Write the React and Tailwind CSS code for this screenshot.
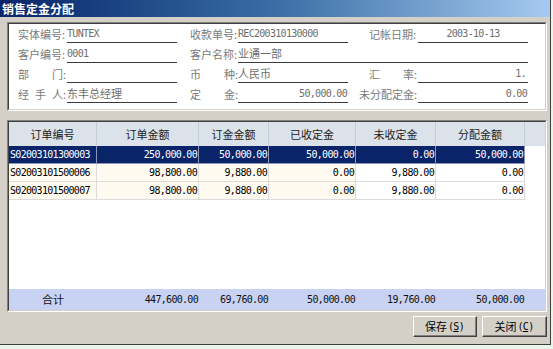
import React from "react";

const CJK = "font-['Noto_Sans_CJK_SC','Noto_Sans',sans-serif]";
const MONO = "font-['DejaVu_Sans_Mono','Liberation_Mono',monospace] text-[10px] tracking-[-0.7px]";

function Label({ parts, className = "" }) {
  return (
    <div className={`flex justify-between whitespace-nowrap text-[11px] leading-[13px] text-[#7a7a7a] pb-[3px] self-end ${className}`}>
      {parts.map((p, i) => (
        <span key={i}>{p}</span>
      ))}
    </div>
  );
}

function Field({ children, className = "", align = "justify-start" }) {
  return (
    <div className={`h-[19px] border-b border-[#3a3a3a] flex items-end pb-[2px] ${align} ${className}`}>
      {children}
    </div>
  );
}

const mono = (t) => <span className={`${MONO} leading-[13px] text-[#6e6e6e]`}>{t}</span>;
const cj = (t) => <span className="text-[11px] leading-[13px] text-[#6e6e6e]">{t}</span>;

const W = ["w-[88px]", "w-[102px]", "w-[70px]", "w-[87px]", "w-[80px]", "w-[89px]"];
const HEAD = ["订单编号", "订单金额", "订金金额", "已收定金", "未收定金", "分配金额"];
const ROWS = [
  ["S02003101300003", "250,000.00", "50,000.00", "50,000.00", "0.00", "50,000.00"],
  ["S02003101500006", "98,800.00", "9,880.00", "0.00", "9,880.00", "0.00"],
  ["S02003101500007", "98,800.00", "9,880.00", "0.00", "9,880.00", "0.00"],
];
const TOTAL = ["合计", "447,600.00", "69,760.00", "50,000.00", "19,760.00", "50,000.00"];

function Sunken({ className = "", children }) {
  return (
    <div className={`border-t border-l border-t-[#808080] border-l-[#808080] border-b border-r border-b-white border-r-white ${className}`}>
      <div className="h-full border-t border-l border-t-[#404040] border-l-[#404040] border-b border-r border-b-[#d4d0c8] border-r-[#d4d0c8] bg-white flex flex-col">
        {children}
      </div>
    </div>
  );
}

function Button({ children, className = "" }) {
  return (
    <div className={`h-[21px] border-t border-l border-t-white border-l-white border-b border-r border-b-[#404040] border-r-[#404040] ${className}`}>
      <div className="h-full border-b border-r border-b-[#808080] border-r-[#808080] bg-[#d4d0c8] flex items-center justify-center text-[11px] leading-[13px] text-black">
        {children}
      </div>
    </div>
  );
}

export default function App() {
  return (
    <div className={`w-[553px] h-[349px] bg-[#eaf5ea] overflow-hidden ${CJK}`}>
      <div className="w-[551px] h-[345px] bg-[#d4d0c8] border-r border-b border-[#404040] flex flex-col">
        <div className="h-[17px] shrink-0 bg-gradient-to-r from-[#0a246a] via-[#3a6ea5] to-[#a6caf0] flex items-center pl-[2px]">
          <span className="text-white font-bold text-[12px] leading-[14px]">销售定金分配</span>
        </div>

        <div className="pl-[7px] pt-[5px] flex flex-col">
          <Sunken className="w-[540px] h-[89px]">
            <div className="flex flex-col pl-[9px]">
              <div className="h-[20px] flex">
                <Label parts={["实体编号:"]} className="w-[48px]" />
                <Field className="w-[110px] ml-[1px]">{mono("TUNTEX")}</Field>
                <Label parts={["收款单号:"]} className="w-[48px] ml-[13px]" />
                <Field className="w-[110px]">{mono("REC200310130000")}</Field>
                <Label parts={["记帐日期:"]} className="w-[48px] ml-[21px]" />
                <Field className="w-[110px] ml-[1px]" align="justify-center">{mono("2003-10-13")}</Field>
              </div>
              <div className="h-[20px] flex">
                <Label parts={["客户编号:"]} className="w-[48px]" />
                <Field className="w-[110px] ml-[1px]">{mono("0001")}</Field>
                <Label parts={["客户名称:"]} className="w-[48px] ml-[13px]" />
                <Field className="w-[290px]">{cj("业通一部")}</Field>
              </div>
              <div className="h-[20px] flex">
                <Label parts={["部", "门:"]} className="w-[48px]" />
                <Field className="w-[110px] ml-[1px]" />
                <Label parts={["币", "种:"]} className="w-[48px] ml-[13px]" />
                <Field className="w-[110px]">{cj("人民币")}</Field>
                <Label parts={["汇", "率:"]} className="w-[48px] ml-[21px]" />
                <Field className="w-[110px] ml-[1px] pr-[2px]" align="justify-end">{mono("1.")}</Field>
              </div>
              <div className="h-[20px] flex">
                <Label parts={["经", "手", "人:"]} className="w-[48px]" />
                <Field className="w-[110px] ml-[1px]">{cj("东丰总经理")}</Field>
                <Label parts={["定", "金:"]} className="w-[48px] ml-[13px]" />
                <Field className="w-[110px] pr-[1px]" align="justify-end">{mono("50,000.00")}</Field>
                <Label parts={["未分配定金:"]} className="w-[59px] ml-[10px] justify-end" />
                <Field className="w-[110px] ml-[1px] pr-[1px]" align="justify-end">{mono("0.00")}</Field>
              </div>
            </div>
          </Sunken>

          <Sunken className="w-[540px] h-[192px] mt-[9px]">
            <div className="h-[24px] flex bg-[#dbe2ea] shrink-0">
              {HEAD.map((h, i) => (
                <div key={i} className={`${W[i]} h-full border-r border-[#c3ccd6] flex items-center justify-center text-[11px] leading-[13px] text-[#222]`}>
                  {h}
                </div>
              ))}
              <div className="flex-1 h-full" />
            </div>
            {ROWS.map((r, ri) => {
              const sel = ri === 0;
              return (
                <div key={ri} className="h-[18px] flex shrink-0">
                  {r.map((c, ci) => {
                    const bg = sel ? "bg-[#0a246a] text-white border-[#8d96b8]" : ci < 4 ? "bg-[#fffaef] text-black border-[#dcdcdc]" : "bg-white text-black border-[#dcdcdc]";
                    return (
                      <div key={ci} className={`${W[ci]} h-full border-r border-b ${bg} flex items-center ${ci === 0 ? "justify-start pl-[1px]" : "justify-end pr-[1px]"}`}>
                        <span className={`${MONO} leading-[12px]`}>{c}</span>
                      </div>
                    );
                  })}
                  <div className="flex-1 h-full bg-white" />
                </div>
              );
            })}
            <div className="flex-1" />
            <div className="h-[21px] flex bg-[#c8d3f3] shrink-0">
              {TOTAL.map((c, ci) => (
                <div key={ci} className={`${W[ci]} h-full flex items-center ${ci === 0 ? "justify-center" : "justify-end pr-[1px]"}`}>
                  {ci === 0 ? (
                    <span className="text-[11px] leading-[13px] text-[#111]">{c}</span>
                  ) : (
                    <span className={`${MONO} leading-[12px] text-[#111]`}>{c}</span>
                  )}
                </div>
              ))}
              <div className="flex-1" />
            </div>
          </Sunken>

          <div className="w-[540px] flex justify-end gap-[5px] mt-[4px]">
            <Button className="w-[64px]">
              保存<span className={`${MONO} ml-[1px]`}>(<u>S</u>)</span>
            </Button>
            <Button className="w-[65px]">
              关闭<span className={`${MONO} ml-[1px]`}>(<u>C</u>)</span>
            </Button>
          </div>
        </div>
      </div>
    </div>
  );
}
